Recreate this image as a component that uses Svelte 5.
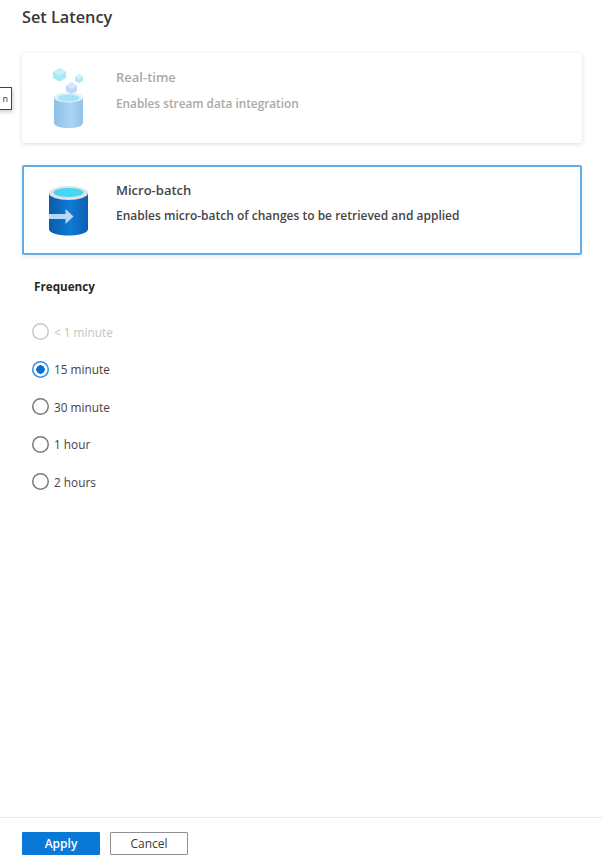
<script lang="ts">
	const options = [
		{ label: "< 1 minute", disabled: true },
		{ label: "15 minute", checked: true },
		{ label: "30 minute" },
		{ label: "1 hour" },
		{ label: "2 hours" },
	];
</script>

<div class="panel">
	<main class="content">
		<h1>Set Latency</h1>

		<div class="tip">n</div>

		<section class="card disabled">
			<svg class="icon" width="38" height="68" viewBox="0 0 38 68">
				<defs>
					<linearGradient id="rt-body" x1="0" x2="1" y1="0" y2="0">
						<stop offset="0" stop-color="#8fbfe6" />
						<stop offset="0.6" stop-color="#abd3f4" />
						<stop offset="1" stop-color="#92c2e8" />
					</linearGradient>
				</defs>
				<path d="M4 33v26c0 3 6.500 5 14.500 5s14.500-2 14.500-5V33z" fill="url(#rt-body)" />
				<ellipse cx="18.500" cy="33.500" rx="14.500" ry="5" fill="#e3f1fb" />
				<ellipse cx="18.500" cy="34" rx="11" ry="3.400" fill="#a5e4f7" />
				<path d="M3 8l6.500-4L16 8v6l-6.500 3.500L3 14z" fill="#a9e8f8" />
				<path d="M3 8l6.500 3.500L16 8 9.500 4z" fill="#c5f1fb" />
				<path d="M25 13l4-3 4 3v4l-4 2-4-2z" fill="#b1e6f6" />
				<path d="M25 13l4 2.500 4-2.500-4-3z" fill="#cdf1fa" />
				<path d="M16 22l5.500-4 5.500 4v5l-5.500 3-5.500-3z" fill="#bcd6fa" />
				<path d="M16 22l5.500 3 5.500-3-5.500-4z" fill="#d6e6fd" />
			</svg>
			<div class="text">
				<div class="name">Real-time</div>
				<div class="desc">Enables stream data integration</div>
			</div>
		</section>

		<section class="card selected">
			<svg class="icon" width="41" height="52" viewBox="0 0 41 52">
				<defs>
					<linearGradient id="mb-body" x1="0" x2="1" y1="0" y2="0">
						<stop offset="0" stop-color="#0a5cab" />
						<stop offset="0.55" stop-color="#0f7bd6" />
						<stop offset="1" stop-color="#0b5fb0" />
					</linearGradient>
				</defs>
				<path d="M1 8v36c0 4 8.500 6.500 19.500 6.500S40 48 40 44V8z" fill="url(#mb-body)" />
				<ellipse cx="20.500" cy="8" rx="19.500" ry="7" fill="#dfe3e6" />
				<ellipse cx="20.500" cy="7.500" rx="15" ry="4.500" fill="#47d6f5" />
				<path d="M1 29h16.500v-5l8 7.500-8 7.500v-5H1z" fill="#b5d9f6" />
			</svg>
			<div class="text">
				<div class="name">Micro-batch</div>
				<div class="desc">Enables micro-batch of changes to be retrieved and applied</div>
			</div>
		</section>

		<h2>Frequency</h2>

		<div class="options">
			{#each options as option}
				<div class="option" class:off={option.disabled}>
					<span class="radio" class:checked={option.checked}></span>
					<span>{option.label}</span>
				</div>
			{/each}
		</div>
	</main>

	<footer class="footer">
		<button type="button" class="apply">Apply</button>
		<button type="button" class="cancel">Cancel</button>
	</footer>
</div>

<style>
	:global(body) {
		background: #fff;
		font-family: "Open Sans", "Noto Sans", sans-serif;
		color: #323130;
	}

	.panel {
		display: flex;
		flex-direction: column;
		height: 868px;
		overflow: hidden;
	}

	.content {
		position: relative;
		flex: 1;
		padding: 7px 20px 0 22px;
	}

	h1 {
		margin: 0 0 26px;
		font-size: 16.300px;
		line-height: 20px;
		font-weight: 600;
		color: #3a3937;
	}

	.tip {
		position: absolute;
		left: -12px;
		top: 87px;
		width: 24px;
		height: 23px;
		border: 1px solid #444;
		background: #fff;
		box-shadow: 1px 2px 4px rgba(0, 0, 0, 0.2);
		font-size: 9px;
		line-height: 21px;
		text-align: right;
		padding-right: 3px;
		box-sizing: border-box;
		color: #333;
	}

	.card {
		display: flex;
		align-items: center;
		box-sizing: border-box;
		height: 90px;
		margin-bottom: 22px;
		border-radius: 2px;
		background: #fff;
	}

	.card.disabled {
		box-shadow: 0 1px 4px rgba(0, 0, 0, 0.14);
	}

	.card.selected {
		border: 2px solid #62aee4;
		box-shadow: 0 2px 4px rgba(0, 0, 0, 0.08);
		margin-bottom: 23px;
	}

	.icon {
		flex: none;
		margin-left: 28px;
		margin-right: 28px;
	}

	.selected .icon {
		margin-left: 24px;
		margin-right: 27px;
		margin-top: 2px;
	}

	.text {
		margin-top: -15px;
	}

	.disabled .text {
		margin-top: -17px;
	}

	.name {
		font-size: 13px;
		line-height: 17px;
		font-weight: 600;
		margin-bottom: 9px;
	}

	.desc {
		font-size: 12px;
		line-height: 16px;
		font-weight: 600;
	}

	.disabled .desc {
		font-size: 11.800px;
	}

	.selected .name,
	.selected .desc {
		color: #464544;
	}

	.disabled .name,
	.disabled .desc {
		color: #a9a9a9;
	}

	h2 {
		margin: 0 0 27px 12px;
		font-size: 11.700px;
		line-height: 17px;
		font-weight: 700;
		color: #2a2928;
	}

	.options {
		display: flex;
		flex-direction: column;
		gap: 18.500px;
		margin-left: 10px;
	}

	.option {
		display: flex;
		align-items: center;
		gap: 5px;
		height: 19px;
		font-size: 11.800px;
		color: #444;
	}

	.option.off {
		color: #c4c4c4;
	}

	.radio {
		flex: none;
		width: 17px;
		height: 17px;
		border-radius: 50%;
		background: #fff;
		box-shadow: inset 0 0 0 1.500px #7a7a7a;
	}

	.off .radio {
		box-shadow: inset 0 0 0 1.500px #c8c8c8;
	}

	.radio.checked {
		box-shadow: inset 0 0 0 1.500px #2c8fe0;
		background: radial-gradient(circle, #0a6ed1 0 4px, #fff 4.500px);
	}

	.footer {
		display: flex;
		gap: 10px;
		height: 51px;
		box-sizing: border-box;
		padding: 14px 22px 0;
		border-top: 1px solid #e8e8e8;
	}

	button {
		box-sizing: border-box;
		height: 23px;
		width: 78px;
		padding: 0;
		border-radius: 1px;
		font-family: inherit;
		font-size: 12px;
		font-weight: 400;
	}

	.apply {
		border: 0;
		background: #0a78d7;
		color: #fff;
		font-weight: 600;
	}

	.cancel {
		border: 1px solid #8f8f8f;
		background: #fff;
		color: #3b3a39;
	}
</style>
